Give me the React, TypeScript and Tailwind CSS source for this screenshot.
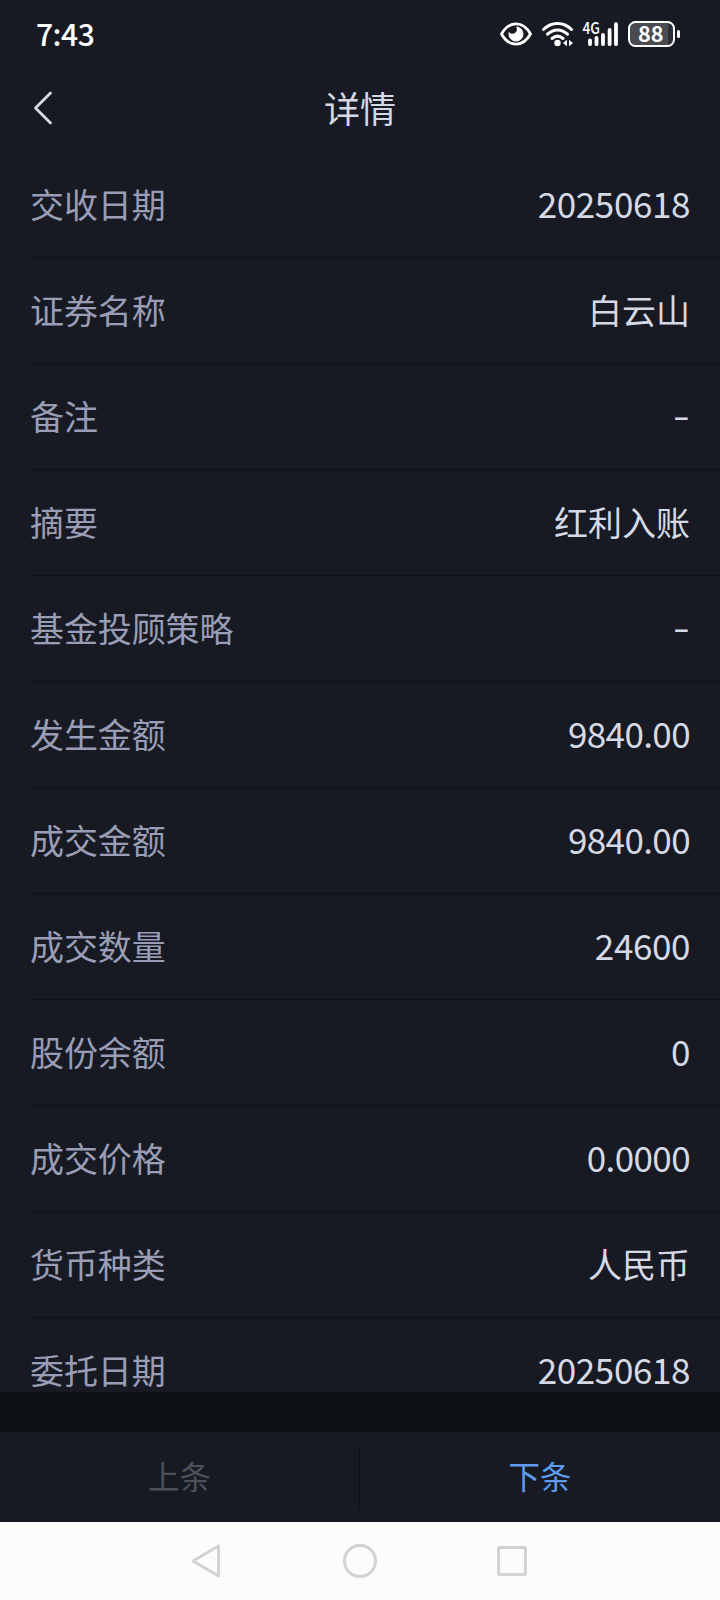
const rows: [string, string][] = [
  ['交收日期', '20250618'],
  ['证券名称', '白云山'],
  ['备注', '–'],
  ['摘要', '红利入账'],
  ['基金投顾策略', '–'],
  ['发生金额', '9840.00'],
  ['成交金额', '9840.00'],
  ['成交数量', '24600'],
  ['股份余额', '0'],
  ['成交价格', '0.0000'],
  ['货币种类', '人民币'],
  ['委托日期', '20250618'],
];

function valueStyle(value: string) {
  if (value === '–') return 'pr-px pb-[3px] text-[28px] leading-none font-bold';
  if (value.includes('.')) return 'pb-[5px] text-[35px] leading-none tracking-[-0.6px]';
  if (/\d/.test(value)) return 'pb-[5px] text-[35px] leading-none tracking-[-0.4px]';
  return 'pb-[2px] text-[34px] leading-none';
}

function StatusIcons() {
  return (
    <svg className="h-[36px] w-[208px]" viewBox="496 16 208 36" fill="none">
      <path d="M501.5 34C509 20.5 523 20.5 530.5 34C523 47.5 509 47.5 501.5 34Z" stroke="#fff" strokeWidth="2.8" strokeLinejoin="round" />
      <path d="M516 26.500a7.500 7.500 0 1 1-7.500 7.500c0-.8.1-1.400.4-2a4 4 0 0 0 7.100-5.500Z" fill="#fff" />
      <g stroke="#fff" strokeWidth="3" strokeLinecap="round">
        <path d="M543.500 29.500C551.500 21.500 563.500 21.500 571.500 29.500" />
        <path d="M547.500 34.200C553.500 28.500 561.500 28.500 567.500 34.200" />
        <path d="M552 38.500C555.500 35.500 559.500 35.500 563 38.500" />
      </g>
      <circle cx="557.500" cy="43" r="3.200" fill="#fff" />
      <path d="M567 39.800v6.400l-4-3.200ZM569 39.800v6.400l4-3.200Z" fill="#fff" />
      <g stroke="#fff" strokeWidth="3.800" strokeLinecap="round">
        <path d="M590 40.500V44.200M596.500 38V44.200M603 35V44.200M609.600 29.800V44.200M616 24.200V44.200" />
      </g>
      <text x="582.500" y="33.800" textLength="17.500" lengthAdjust="spacingAndGlyphs" fill="#fff" className="font-['Noto_Sans_CJK_SC',sans-serif] text-[16px] font-medium">4G</text>
      <path d="M635 23H668V45H635A5 5 0 0 1 630 40V28A5 5 0 0 1 635 23Z" fill="#4a4c52" />
      <path d="M668 23H669A5 5 0 0 1 674 28V40A5 5 0 0 1 669 45H668Z" fill="#2c2f37" />
      <rect x="629" y="22" width="45" height="24" rx="6.500" stroke="#fff" strokeWidth="2" />
      <path d="M678.500 31.500V36.500" stroke="#fff" strokeWidth="3" strokeLinecap="round" />
      <text x="638" y="42" textLength="25.500" lengthAdjust="spacingAndGlyphs" fill="#fff" className="font-['Noto_Sans_CJK_SC',sans-serif] text-[22px] font-bold">88</text>
    </svg>
  );
}

export default function App() {
  return (
    <div className="flex h-[1600px] w-[720px] flex-col overflow-hidden bg-[#171a23] font-['Noto_Sans_CJK_SC',sans-serif] text-[#d5d9e5]">
      <header className="flex h-[68px] shrink-0 items-center justify-between pr-4 pl-9">
        <span className="pb-[2px] text-[30px] leading-none font-medium tracking-[-0.5px] text-white">7:43</span>
        <StatusIcons />
      </header>
      <div className="grid h-[84px] shrink-0 grid-cols-3 items-center pb-1">
        <svg className="ml-[30px] h-10 w-7" viewBox="30 88 28 40" fill="none">
          <path d="M50.500 93L35.500 108L50.500 123" stroke="#d5d9e5" strokeWidth="2.800" strokeLinecap="round" strokeLinejoin="round" />
        </svg>
        <h1 className="pb-[2px] text-center text-[36px] leading-none">详情</h1>
      </div>
      <main className="h-[1240px] shrink-0 overflow-hidden">
        {rows.map(([label, value]) => (
          <div key={label} className="ml-[30px] flex h-[106px] items-center justify-between border-b border-[#0d1015] pr-[30px]">
            <span className="pb-[2px] text-[34px] leading-none tracking-[-0.1px] text-[#999db5]">{label}</span>
            <span className={valueStyle(value)}>{value}</span>
          </div>
        ))}
      </main>
      <div className="h-10 shrink-0 bg-[#0d1015]" />
      <div className="flex h-[90px] shrink-0 items-center border-b border-[#0d1015] text-[31.500px] leading-none">
        <span className="w-[359px] pb-px text-center text-[#4d505b]">上条</span>
        <span className="h-[62px] w-px bg-[#0d1015]" />
        <span className="flex-1 pb-px text-center text-[#5c9bee]">下条</span>
      </div>
      <nav className="flex h-[78px] shrink-0 bg-[#fcfcfc]">
        <svg className="h-[78px] w-[720px]" viewBox="0 1522 720 78" fill="none" stroke="#d2d2d2" strokeWidth="3" strokeLinejoin="round">
          <path d="M193 1561L218.500 1546V1576Z" />
          <circle cx="360" cy="1561" r="15.500" />
          <rect x="498.500" y="1547.500" width="27" height="27" rx="1" />
        </svg>
      </nav>
    </div>
  );
}
